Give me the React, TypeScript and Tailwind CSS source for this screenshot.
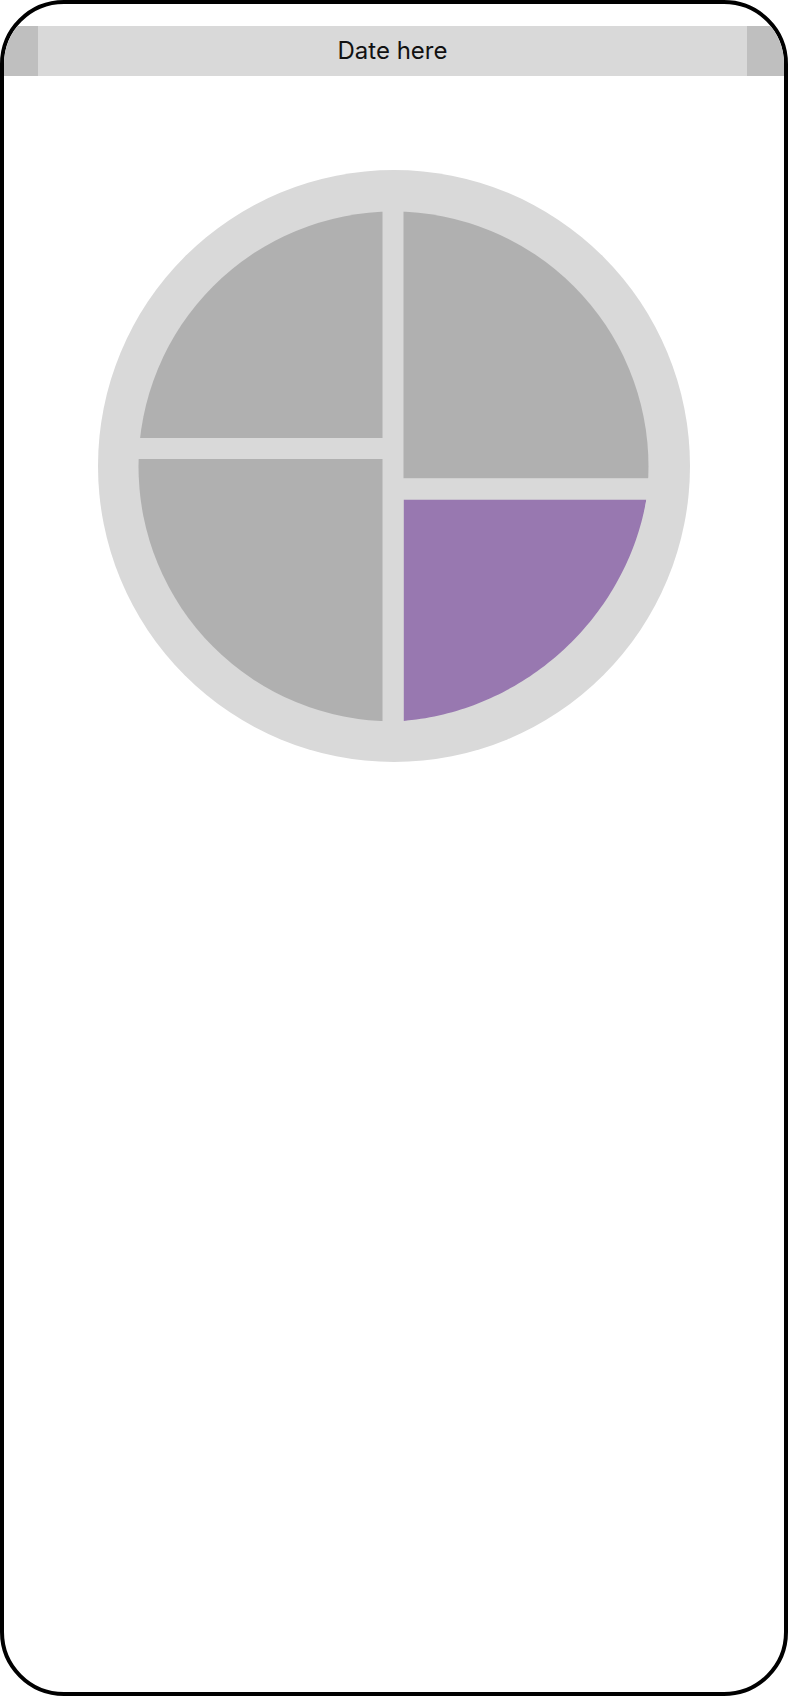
import React from "react";

function purplePath(): string {
  const cx = 295.5;
  const cy = 296.5;
  const R = 255;
  const top = 329.8;
  const left = 305.8;
  const th0 = Math.asin((top - cy) / R);
  const th1 = Math.PI / 2;
  const pts: string[] = [];
  pts.push(`M${left},${top}`);
  const N = 80;
  for (let i = 0; i <= N; i++) {
    const t = i / N;
    const th = th0 + (th1 - th0) * t;
    const d = 5 * Math.sin(Math.PI * t);
    const r = R - d;
    let x = cx + r * Math.cos(th);
    const y = cy + r * Math.sin(th);
    if (x < left) x = left;
    pts.push(`L${x.toFixed(2)},${y.toFixed(2)}`);
  }
  pts.push("Z");
  return pts.join(" ");
}

export default function App() {
  return (
    <div className="w-[788px] h-[1696px] border-[4px] border-black rounded-[64px] overflow-hidden bg-white flex flex-col">
      <div className="mt-[22px] h-[50px] flex shrink-0">
        <div className="w-[34px] bg-[#bfbfbf]" />
        <div
          className="flex-1 bg-[#d9d9d9] flex items-center justify-center text-[24px] text-[#111111]"
          style={{ fontFamily: "Inter, 'Noto Sans', sans-serif" }}
        >
          Date here
        </div>
        <div className="w-[37px] bg-[#bfbfbf]" />
      </div>
      <div className="mt-[94px] flex justify-center">
        <svg width="592" height="592" viewBox="0 0 592 592">
          <defs>
            <clipPath id="inner">
              <circle cx="295.5" cy="296.5" r="255" />
            </clipPath>
          </defs>
          <circle cx="296" cy="296" r="296" fill="#d9d9d9" />
          <g clipPath="url(#inner)">
            <rect x="0" y="0" width="284.5" height="268" fill="#b0b0b0" />
            <rect x="305.5" y="0" width="286.5" height="308.2" fill="#b0b0b0" />
            <rect x="0" y="289" width="284.5" height="303" fill="#b0b0b0" />
            <path d={purplePath()} fill="#9878b0" />
          </g>
        </svg>
      </div>
    </div>
  );
}
